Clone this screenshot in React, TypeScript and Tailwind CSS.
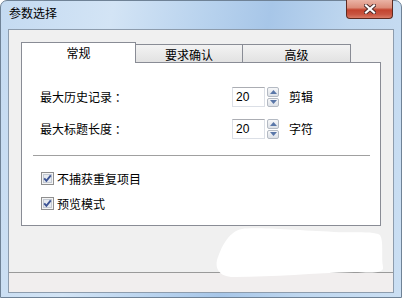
const cjk = "font-['Noto_Sans_CJK_SC','Noto_Sans',sans-serif]";

function Spinner() {
  return (
    <div className="ml-[2px] flex h-[20px] w-[12px] flex-col gap-px">
      {[0, 1].map((i) => (
        <div
          key={i}
          className="flex flex-1 items-center justify-center rounded-[2px] border border-[#b4bac3] bg-[linear-gradient(to_bottom,#f6f7f9,#dde1e7)]"
        >
          <svg width="7" height="4" viewBox="0 0 7 4">
            {i === 0 ? (
              <path d="M0 4 L3.5 0 L7 4 Z" fill="#5a77a8" />
            ) : (
              <path d="M0 0 L3.5 4 L7 0 Z" fill="#5a77a8" />
            )}
          </svg>
        </div>
      ))}
    </div>
  );
}

function NumberRow({ label, unit, className }: { label: string; unit: string; className?: string }) {
  return (
    <div className={`flex h-[20px] items-center ${className ?? ''}`}>
      <div className="w-[210px] whitespace-pre pl-[18px] text-[12px] leading-none text-black">{label}</div>
      <div className="flex h-[20px] w-[33px] items-center border border-[#dbdfe6] border-t-[#abadb3] bg-white pl-[3px] font-['Liberation_Sans',sans-serif] text-[12px] text-black">
        20
      </div>
      <Spinner />
      <div className="ml-[10px] text-[12px] leading-none text-black">{unit}</div>
    </div>
  );
}

function Check({ label, className }: { label: string; className?: string }) {
  return (
    <div className={`flex items-center pl-[19px] ${className ?? ''}`}>
      <svg width="13" height="13" viewBox="0 0 13 13">
        <rect x="0.5" y="0.5" width="12" height="12" fill="#f4f4f4" stroke="#8f8f8f" />
        <rect x="2.5" y="2.5" width="8" height="8" fill="#e6eaf0" stroke="#c3c9d2" />
        <path d="M3.2 6.3 L5.4 8.8 L9.8 3.4" fill="none" stroke="#3d5494" strokeWidth="1.9" />
      </svg>
      <span className="ml-[3px] text-[12px] leading-none text-black">{label}</span>
    </div>
  );
}

export default function App() {
  return (
    <div className={`h-[298px] w-[402px] overflow-hidden bg-white ${cjk}`}>
      <div className="relative flex h-full w-full flex-col rounded-t-[7px] border border-[#6f8296] bg-[linear-gradient(100deg,#c4daf1_0%,#d3e4f5_25%,#b9d3ee_45%,#a7c6e8_60%,#bfd7ef_78%,#cbdff3_100%)]">
        {/* title bar */}
        <div className="flex h-[28px] items-start justify-between">
          <div className="pl-[8px] pt-[6px] text-[12px] leading-none text-black">参数选择</div>
          <div className="mr-[8px] -mt-px flex h-[19px] w-[47px] items-center justify-center rounded-b-[4px] border border-t-0 border-[#5e2a20] bg-[linear-gradient(to_bottom,#eab3a5_0%,#dc8d7a_42%,#c3432e_55%,#c85541_80%,#d97b66_100%)]">
            <svg width="12" height="10" viewBox="0 0 12 10">
              <path d="M2 1.5 L10 8.5 M10 1.5 L2 8.5" stroke="#4a2a2a" strokeWidth="4" strokeLinecap="square" />
              <path d="M2 1.5 L10 8.5 M10 1.5 L2 8.5" stroke="#ffffff" strokeWidth="2.2" strokeLinecap="square" />
            </svg>
          </div>
        </div>

        {/* client area */}
        <div className="mx-[7px] flex h-[264px] flex-col border border-[#8d9cad] bg-[#f0f0f0]">
          <div className="pl-[12px] pt-[12px]">
            {/* tabs */}
            <div className="flex h-[20px] items-end">
              <div className="relative z-10 -mb-px flex h-[21px] w-[115px] items-center justify-center border-x border-t border-[#898c95] bg-white pb-px text-[12px] leading-none text-black">
                常规
              </div>
              <div className="flex h-[18px] w-[107px] items-center justify-center border-r border-t border-[#898c95] bg-[linear-gradient(to_bottom,#f3f3f3,#e2e2e2)] pt-[3px] text-[12px] leading-none text-black">
                要求确认
              </div>
              <div className="flex h-[18px] w-[108px] items-center justify-center border-r border-t border-[#898c95] bg-[linear-gradient(to_bottom,#f3f3f3,#e2e2e2)] pt-[3px] text-[12px] leading-none text-black">
                高级
              </div>
            </div>
            {/* panel */}
            <div className="flex h-[164px] w-[360px] flex-col border border-[#898c95] bg-white pt-[24px]">
              <NumberRow label="最大历史记录 ：" unit="剪辑" />
              <NumberRow label="最大标题长度 ：" unit="字符" className="mt-[12px]" />
              <div className="ml-[11px] mr-[10px] mt-[16px] h-px bg-[#a0a0a0]" />
              <Check label="不捕获重复项目" className="mt-[16px]" />
              <Check label="预览模式" className="mt-[12px]" />
            </div>
          </div>
          <div className="flex-1" />
          <div className="h-[20px] border-t border-[#9a9a9a] bg-[#f1eeee]" />
        </div>

        {/* redaction blob */}
        <svg className="absolute left-[213px] top-[226px]" width="172" height="54" viewBox="0 0 172 54">
          <path
            d="M28 2 C40 0 80 3 120 5 C140 6 160 4 166 8 C170 14 167 30 169 40 C170 46 160 46 140 45 C100 46 60 50 20 50 C4 50 0 40 4 30 C8 18 16 4 28 2 Z"
            fill="#ffffff"
          />
        </svg>
      </div>
    </div>
  );
}
